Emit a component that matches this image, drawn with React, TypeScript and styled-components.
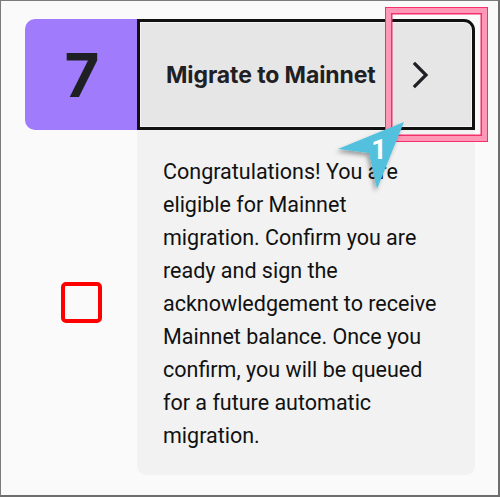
import React from "react";
import styled, { createGlobalStyle } from "styled-components";

const Global = createGlobalStyle`
  html, body { margin: 0; padding: 0; background: #fafafa; }
  * { box-sizing: border-box; }
`;

const Frame = styled.div`
  position: relative;
  width: 500px;
  height: 497px;
  background: #fafafa;
  border-top: 1px solid #7a7a7a;
  border-left: 1px solid #7a7a7a;
  border-right: 2px solid #6e6e6e;
  border-bottom: 2px solid #6e6e6e;
  padding: 18px 0 0 24px;
  font-family: Roboto, "Liberation Sans", sans-serif;
`;

const Step = styled.div`
  display: grid;
  grid-template-columns: 112px 338px;
  grid-template-rows: 111px auto;
`;

const NumberBadge = styled.div`
  background: #a07cfc;
  border-radius: 10px 0 0 10px;
  display: flex;
  align-items: center;
  justify-content: center;
  font-family: Inter, "Liberation Sans", sans-serif;
  font-weight: 700;
  font-size: 60px;
  color: #1f2023;
  padding-left: 2px;
`;

const HeaderButton = styled.button`
  display: flex;
  align-items: center;
  gap: 36px;
  margin: 0;
  padding: 0 0 0 26px;
  background: #e6e6e6;
  border: 3px solid #111;
  border-radius: 0 11px 0 0;
  box-shadow: inset 0 0 0 1px #f4f4f4;
  cursor: pointer;
`;

const Title = styled.span`
  font-family: Inter, "Liberation Sans", sans-serif;
  font-weight: 700;
  font-size: 23px;
  color: #1f2023;
  letter-spacing: -0.1px;
`;

const CheckCell = styled.div`
  display: flex;
  align-items: center;
  justify-content: center;
`;

const CheckBox = styled.span`
  width: 41px;
  height: 41px;
  border: 4.5px solid #ff0000;
  border-radius: 5px;
  background: #fafafa;
`;

const Body = styled.div`
  background: #f2f2f2;
  border-radius: 0 0 9px 9px;
  padding: 25px 30px 23px 26px;
  font-size: 21.5px;
  line-height: 33px;
  color: #111;
`;

const Highlight = styled.div`
  position: absolute;
  left: 385px;
  top: 7px;
  width: 101px;
  height: 133px;
  border: 5px solid #ff98b6;
  box-shadow: 0 0 0 1px #f52f6c, inset 0 0 0 1.5px #f52f6c;
  pointer-events: none;
`;

const Pointer = styled.svg`
  position: absolute;
  left: 325px;
  top: 110px;
  overflow: visible;
  pointer-events: none;
`;

export default function App() {
  return (
    <Frame>
      <Global />
      <Step>
        <NumberBadge>7</NumberBadge>
        <HeaderButton>
          <Title>Migrate to Mainnet</Title>
          <svg width="17" height="28" viewBox="0 0 17 28">
            <polyline
              points="3,3 14,14 3,25"
              fill="none"
              stroke="#1f2023"
              strokeWidth="3.2"
              strokeLinecap="square"
            />
          </svg>
        </HeaderButton>
        <CheckCell>
          <CheckBox />
        </CheckCell>
        <Body>
          Congratulations! You are eligible for Mainnet migration. Confirm you are
          ready and sign the acknowledgement to receive Mainnet balance. Once you
          confirm, you will be queued for a future automatic migration.
        </Body>
      </Step>
      <Highlight />
      <Pointer width="90" height="90" viewBox="325 110 90 90">
        <defs>
          <filter id="sh" x="-30%" y="-30%" width="160%" height="160%">
            <feDropShadow dx="-2" dy="3" stdDeviation="2" floodColor="#000" floodOpacity="0.35" />
          </filter>
        </defs>
        <polygon
          points="403,121 337,148 368,152 376,188"
          fill="#52c1de"
          filter="url(#sh)"
        />
        <text
          x="378"
          y="158"
          textAnchor="middle"
          fontFamily="Roboto, 'Liberation Sans', sans-serif"
          fontWeight="700"
          fontSize="27"
          fill="#ffffff"
        >
          1
        </text>
      </Pointer>
    </Frame>
  );
}
